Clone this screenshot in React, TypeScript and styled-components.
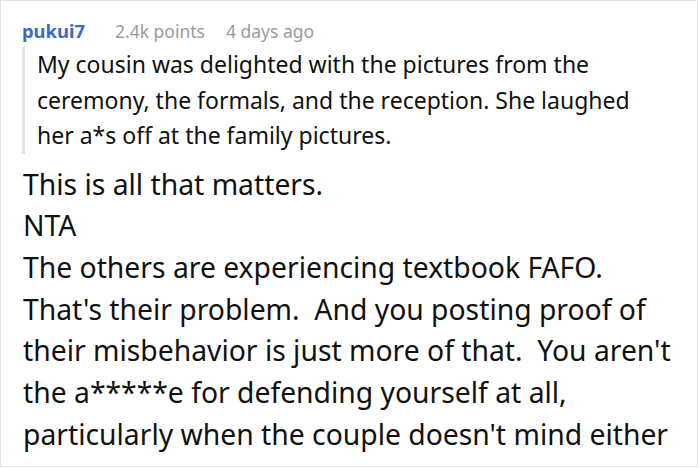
import styled, { createGlobalStyle } from 'styled-components';

const GlobalStyle = createGlobalStyle`
  html, body {
    margin: 0;
    padding: 0;
    background: #fff;
  }
  body {
    font-family: 'Noto Sans', 'Open Sans', sans-serif;
  }
`;

const Card = styled.div`
  box-sizing: border-box;
  width: 698px;
  height: 467px;
  border: 1px solid #e3e3e3;
  padding: 18px 0 0 21px;
  overflow: hidden;
  color: #111;
`;

const Meta = styled.div`
  display: flex;
  align-items: baseline;
  line-height: 24px;
  color: #9a9a9a;
  font-size: 17.5px;
`;

const User = styled.span`
  color: #3a6cc0;
  font-weight: 700;
  font-size: 18.4px;
  margin-right: 30px;
`;

const Stat = styled.span`
  margin-right: 21px;
`;

const Quote = styled.blockquote`
  margin: 4px 0 0 0;
  padding: 0 0 0 12px;
  border-left: 3px solid #e2e2e2;
  font-size: 23px;
  line-height: 35.5px;
`;

const Body = styled.div`
  margin-top: 10px;
  padding-left: 1px;
  font-size: 28.3px;
  line-height: 41.7px;
`;

const Line = styled.div`
  white-space: pre;
`;

const quoteLines = [
  'My cousin was delighted with the pictures from the',
  'ceremony, the formals, and the reception. She laughed',
  'her a*s off at the family pictures.',
];

const bodyLines = [
  'This is all that matters.',
  'NTA',
  'The others are experiencing textbook FAFO.',
  "That's their problem.  And you posting proof of",
  "their misbehavior is just more of that.  You aren't",
  'the a*****e for defending yourself at all,',
  "particularly when the couple doesn't mind either",
];

export default function App() {
  return (
    <>
      <GlobalStyle />
      <Card>
        <Meta>
          <User>pukui7</User>
          <Stat>2.4k points</Stat>
          <span>4 days ago</span>
        </Meta>
        <Quote>
          {quoteLines.map((l) => (
            <Line key={l}>{l}</Line>
          ))}
        </Quote>
        <Body>
          {bodyLines.map((l) => (
            <Line key={l}>{l}</Line>
          ))}
        </Body>
      </Card>
    </>
  );
}
